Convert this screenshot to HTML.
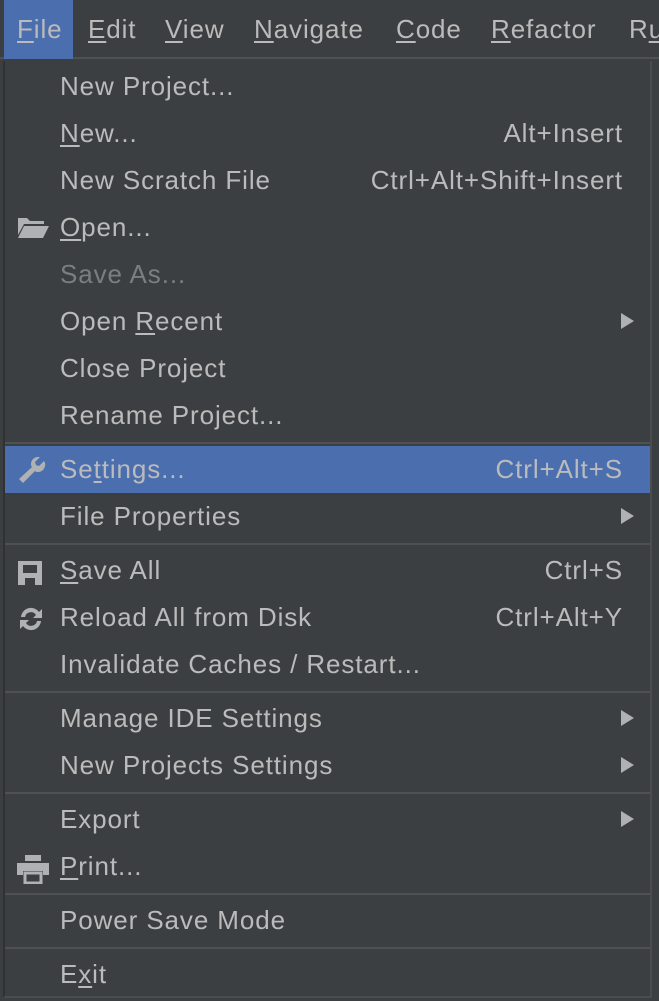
<!DOCTYPE html>
<html><head><meta charset="utf-8"><style>
*{margin:0;padding:0;box-sizing:border-box}
body{width:659px;height:1001px;background:#3c3f41;font-family:"Liberation Sans",sans-serif;color:#bbbbbb;overflow:hidden;position:relative}
.bar{position:absolute;left:0;top:0;width:659px;height:59px;background:#3c3f41;border-bottom:2px solid #4e5052}
.bar span{position:absolute;top:14px;font-size:26px;letter-spacing:0.9px}
.bar .sel{background:#4b6eaf;left:4px;top:0;height:59px;width:69px;padding:14px 0 0 13px}
u{text-decoration:underline;text-underline-offset:3px}
.pop{position:absolute;left:3px;top:61px;padding-top:2px;width:649px;height:937px;background:#3c3f41;border-left:2px solid #2f3133;border-right:2px solid #4a4c4e;border-bottom:2px solid #4a4c4e}
.it{position:relative;height:47px;font-size:26px;line-height:47px;padding-left:55px;letter-spacing:0.9px}
.it .k{position:absolute;right:27px;top:0}
.it.h{background:#4b6eaf}
.it.d{color:#7b7e80}
.sep{height:7px;position:relative}
.sep:after{content:"";position:absolute;left:0;right:0;top:3px;height:2px;background:#4e5052}
.ar{position:absolute;right:16px;top:15px;width:0;height:0;border-left:13px solid #afb1b3;border-top:8px solid transparent;border-bottom:8px solid transparent}
.ic{position:absolute;left:11px;top:11px}
</style></head><body>
<div class="bar">
<span class="sel"><u>F</u>ile</span>
<span style="left:88px"><u>E</u>dit</span>
<span style="left:165px"><u>V</u>iew</span>
<span style="left:254px"><u>N</u>avigate</span>
<span style="left:396px"><u>C</u>ode</span>
<span style="left:491px"><u>R</u>efactor</span>
<span style="left:629px">R<u>u</u></span>
</div>
<div class="pop">
<div class="it">New Project...</div>
<div class="it"><u>N</u>ew...<span class="k">Alt+Insert</span></div>
<div class="it">New Scratch File<span class="k">Ctrl+Alt+Shift+Insert</span></div>
<div class="it"><svg class="ic" width="34" height="24" viewBox="0 0 34 24"><path d="M2 3h9l3 3h14v3H8L2 20z" fill="#afb1b3"/><path d="M8 11h25l-6 12H2z" fill="#afb1b3"/></svg><u>O</u>pen...</div>
<div class="it d">Save As...</div>
<div class="it">Open <u>R</u>ecent<span class="ar"></span></div>
<div class="it">Close Project</div>
<div class="it">Rename Project...</div>
<div class="sep"></div>
<div class="it h"><svg class="ic" width="32" height="30" viewBox="0 0 32 30"><path d="M28 4l-5 5-3-1-1-3 5-5c-4-1-9 2-9 7 0 1 0 2 1 3L3 22l4 4 12-12c1 1 2 1 3 1 5 0 8-5 7-9z" fill="#afb1b3"/></svg>Se<u>t</u>tings...<span class="k">Ctrl+Alt+S</span></div>
<div class="it">File Properties<span class="ar"></span></div>
<div class="sep"></div>
<div class="it"><svg class="ic" width="28" height="28" viewBox="0 0 28 28"><path d="M2 3h24v24H2zM7 7v8h14V7zM9 20v7h10v-7z" fill="#afb1b3" fill-rule="evenodd"/><rect x="12" y="22" width="5" height="5" fill="#3c3f41"/></svg><u>S</u>ave All<span class="k">Ctrl+S</span></div>
<div class="it"><svg class="ic" width="30" height="28" viewBox="0 0 30 28"><path d="M5 12a10 10 0 0 1 18-5l3-3v9h-9l3-3a6 6 0 0 0-11 2z" fill="#afb1b3"/><path d="M25 16a10 10 0 0 1-18 5l-3 3v-9h9l-3 3a6 6 0 0 0 11-2z" fill="#afb1b3"/></svg>Reload All from Disk<span class="k">Ctrl+Alt+Y</span></div>
<div class="it">Invalidate Caches / Restart...</div>
<div class="sep"></div>
<div class="it">Manage IDE Settings<span class="ar"></span></div>
<div class="it">New Projects Settings<span class="ar"></span></div>
<div class="sep"></div>
<div class="it">Export<span class="ar"></span></div>
<div class="it"><svg class="ic" width="34" height="30" viewBox="0 0 34 30"><rect x="9" y="1" width="16" height="6" fill="#afb1b3"/><path d="M1 9h32v12h-6v-4H7v4H1z" fill="#afb1b3"/><path d="M9 19h16v10H9z" fill="none" stroke="#afb1b3" stroke-width="3"/></svg><u>P</u>rint...</div>
<div class="sep"></div>
<div class="it">Power Save Mode</div>
<div class="sep"></div>
<div class="it">E<u>x</u>it</div>
</div>
</body></html>
